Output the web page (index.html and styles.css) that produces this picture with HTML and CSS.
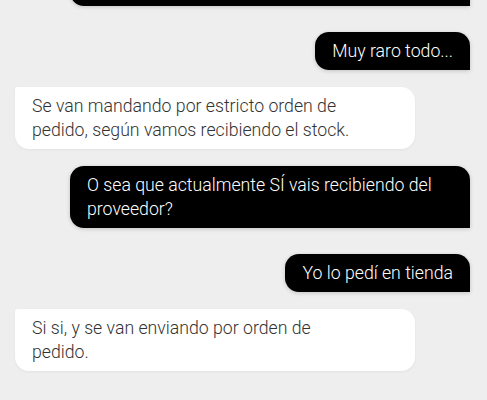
FILE: index.html
```html
<!DOCTYPE html>
<html lang="es">
<head>
    <meta charset="UTF-8">
    <meta name="viewport" content="width=device-width, initial-scale=1.0">
    <title>Chat</title>
    <link rel="stylesheet" href="styles.css">
</head>
<body>
    <div class="chat">
        <div class="messages">
            <div class="msg sent">Pues en la web pone que está disponible desde hace semanas</div>
            <div class="msg sent">Muy raro todo...</div>
            <div class="msg received">Se van mandando por estricto orden de pedido, según vamos recibiendo el stock.</div>
            <div class="msg sent">O sea que actualmente SÍ vais recibiendo del proveedor?</div>
            <div class="msg sent">Yo lo pedí en tienda</div>
            <div class="msg received">Si si, y se van enviando por orden de pedido.</div>
        </div>
    </div>
</body>
</html>
```

FILE: styles.css
```css
body {
    margin: 0;
    background-color: #eeeeee;
    font-family: Roboto, "Noto Sans", sans-serif;
    font-weight: 300;
}

.chat {
    height: 400px;
    overflow: hidden;
}

.messages {
    height: 400px;
    display: flex;
    flex-direction: column;
    justify-content: flex-end;
    padding: 0 17px 29px 15px;
    box-sizing: border-box;
}

.msg {
    flex-shrink: 0;
    max-width: 400px;
    box-sizing: border-box;
    font-size: 17.7px;
    line-height: 24px;
    padding: 7px 17px;
}

.msg + .msg {
    margin-top: 17px;
}

.sent + .sent {
    margin-top: 26px;
}

.sent {
    align-self: flex-end;
    background-color: #000;
    color: #fff;
    border-radius: 14px 14px 0 14px;
    box-shadow: 0 1px 4px rgba(0,0,0,0.18);
}

.received {
    align-self: flex-start;
    width: 400px;
    background-color: #fff;
    color: #333;
    padding-right: 53px;
    border-radius: 3px 14px 14px 14px;
    box-shadow: 0 1px 3px rgba(0,0,0,0.05);
}
```
